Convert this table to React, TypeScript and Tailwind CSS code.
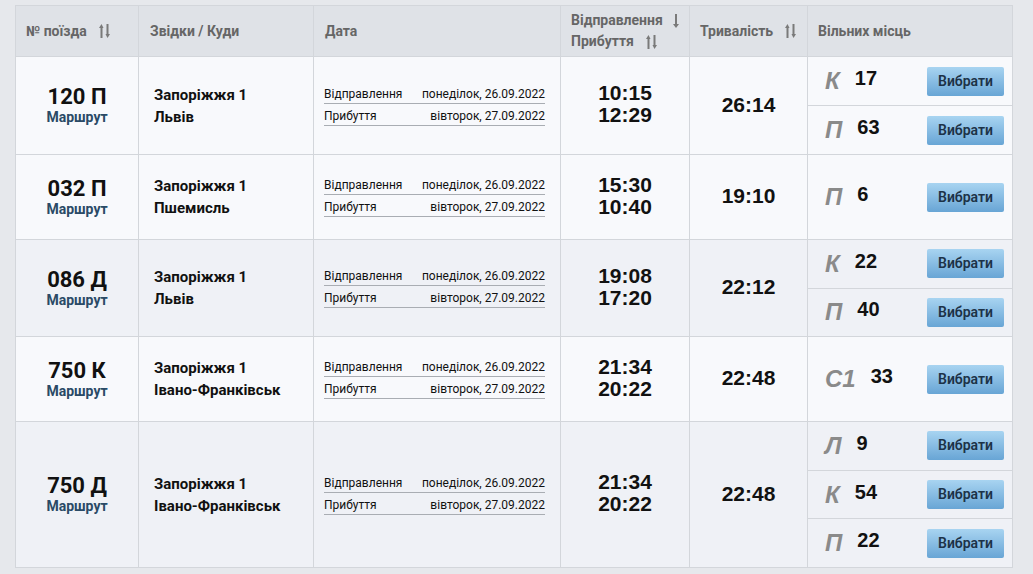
// Train search results table

type Seat = { cls: string; count: number };
type Train = {
  num: string;
  from: string;
  to: string;
  dep: string;
  arr: string;
  depDate: string;
  arrDate: string;
  dur: string;
  seats: Seat[];
  h: string;
  bg: string;
};

const trains: Train[] = [
  { num: "120 П", from: "Запоріжжя 1", to: "Львів", dep: "10:15", arr: "12:29", depDate: "понеділок, 26.09.2022", arrDate: "вівторок, 27.09.2022", dur: "26:14", seats: [{ cls: "К", count: 17 }, { cls: "П", count: 63 }], h: "h-[98px]", bg: "bg-[#f8f9fc]" },
  { num: "032 П", from: "Запоріжжя 1", to: "Пшемисль", dep: "15:30", arr: "10:40", depDate: "понеділок, 26.09.2022", arrDate: "вівторок, 27.09.2022", dur: "19:10", seats: [{ cls: "П", count: 6 }], h: "h-[85px]", bg: "bg-[#f8f9fc]" },
  { num: "086 Д", from: "Запоріжжя 1", to: "Львів", dep: "19:08", arr: "17:20", depDate: "понеділок, 26.09.2022", arrDate: "вівторок, 27.09.2022", dur: "22:12", seats: [{ cls: "К", count: 22 }, { cls: "П", count: 40 }], h: "h-[97px]", bg: "bg-[#eff1f6]" },
  { num: "750 К", from: "Запоріжжя 1", to: "Івано-Франківськ", dep: "21:34", arr: "20:22", depDate: "понеділок, 26.09.2022", arrDate: "вівторок, 27.09.2022", dur: "22:48", seats: [{ cls: "С1", count: 33 }], h: "h-[85px]", bg: "bg-[#f8f9fc]" },
  { num: "750 Д", from: "Запоріжжя 1", to: "Івано-Франківськ", dep: "21:34", arr: "20:22", depDate: "понеділок, 26.09.2022", arrDate: "вівторок, 27.09.2022", dur: "22:48", seats: [{ cls: "Л", count: 9 }, { cls: "К", count: 54 }, { cls: "П", count: 22 }], h: "h-[146px]", bg: "bg-[#eff1f6]" },
];

const cols = "grid grid-cols-[123px_175px_247px_129px_118px_205px]";

function SortIcon() {
  return (
    <svg width="11" height="14" viewBox="0 0 11 14" className="shrink-0">
      <rect x="1.5" y="3" width="2" height="11" fill="#7a7a7a" />
      <path d="M0 4 L2.5 0 L4.5 4 Z" fill="#7a7a7a" />
      <rect x="7.5" y="0" width="2" height="11" fill="#7a7a7a" />
      <path d="M6.5 10 L8.5 14 L11 10 Z" fill="#7a7a7a" />
    </svg>
  );
}

function DownIcon() {
  return (
    <svg width="6" height="14" viewBox="0 0 6 14" className="shrink-0">
      <rect x="2" y="0" width="2" height="11" fill="#7a7a7a" />
      <path d="M0 10 L3 14 L6 10 Z" fill="#7a7a7a" />
    </svg>
  );
}

function Header() {
  const cell = "border-r border-b border-[#d3d6db] flex items-center pl-[10px]";
  return (
    <div className={`${cols} h-[51px] bg-[#dfe2e7] text-[14px] font-bold text-[#666]`}>
      <div className={`${cell} gap-3`}>
        <span>№ поїзда</span>
        <SortIcon />
      </div>
      <div className={`${cell} pl-[11px]`}>Звідки / Куди</div>
      <div className={`${cell} pl-[11px]`}>Дата</div>
      <div className={`${cell} flex-col !items-start justify-center leading-[21px]`}>
        <div className="flex items-center gap-[10px]">
          <span>Відправлення</span>
          <DownIcon />
        </div>
        <div className="flex items-center gap-3">
          <span>Прибуття</span>
          <SortIcon />
        </div>
      </div>
      <div className={`${cell} gap-3`}>
        <span>Тривалість</span>
        <SortIcon />
      </div>
      <div className={cell}>Вільних місць</div>
    </div>
  );
}

function Row({ t }: { t: Train }) {
  const cell = "border-r border-b border-[#d3d6db]";
  const num = "font-['Liberation_Sans',Arial,sans-serif]";
  return (
    <div className={`${cols} ${t.h} ${t.bg}`}>
      <div className={`${cell} flex flex-col items-center justify-center`}>
        <div className="text-[22px] font-bold leading-[24px] text-[#111]">{t.num}</div>
        <div className="text-[14px] font-bold leading-[17px] text-[#2a4a66]">Маршрут</div>
      </div>
      <div className={`${cell} flex flex-col justify-center pl-[15px] text-[15px] font-bold leading-[22px] text-[#111]`}>
        <div>{t.from}</div>
        <div>{t.to}</div>
      </div>
      <div className={`${cell} flex flex-col justify-center pl-[10px] pr-[15px] text-[12px] text-[#111]`}>
        <div className="flex justify-between border-b border-[#a9adb3] leading-[16px] pb-[1px]">
          <span>Відправлення</span>
          <span>{t.depDate}</span>
        </div>
        <div className="flex justify-between border-b border-[#a9adb3] leading-[16px] pb-[1px] mt-[4px]">
          <span>Прибуття</span>
          <span>{t.arrDate}</span>
        </div>
      </div>
      <div className={`${cell} ${num} flex flex-col items-center justify-center text-[21px] font-bold leading-[22px] text-[#111] pb-[3px]`}>
        <div>{t.dep}</div>
        <div>{t.arr}</div>
      </div>
      <div className={`${cell} ${num} flex items-center justify-center text-[21px] font-bold text-[#111] pb-[2px]`}>
        {t.dur}
      </div>
      <div className={`${cell} flex flex-col`}>
        {t.seats.map((s, i) => (
          <div
            key={i}
            className={`flex-1 flex items-center pl-[17px] pr-[8px] ${i > 0 ? "border-t border-[#d3d6db]" : ""}`}
          >
            <span className={`${num} italic font-bold text-[24px] text-[#8a8a8a] leading-none`}>{s.cls}</span>
            <span className={`${num} font-bold text-[20px] text-[#111] leading-none ml-[15px] -mt-[6px]`}>{s.count}</span>
            <button className="ml-auto w-[77px] h-[29px] rounded-[2px] bg-gradient-to-b from-[#a8d4f1] to-[#68a5d5] text-[14px] font-semibold text-[#1c3247]">
              Вибрати
            </button>
          </div>
        ))}
      </div>
    </div>
  );
}

export default function App() {
  return (
    <div className="min-h-[574px] bg-[#e6e8ec] pt-[5px] pl-[15px] font-['Roboto',sans-serif]">
      <div className="w-[998px] border-l border-t border-[#d3d6db]">
        <Header />
        {trains.map((t, i) => (
          <Row key={i} t={t} />
        ))}
      </div>
    </div>
  );
}
